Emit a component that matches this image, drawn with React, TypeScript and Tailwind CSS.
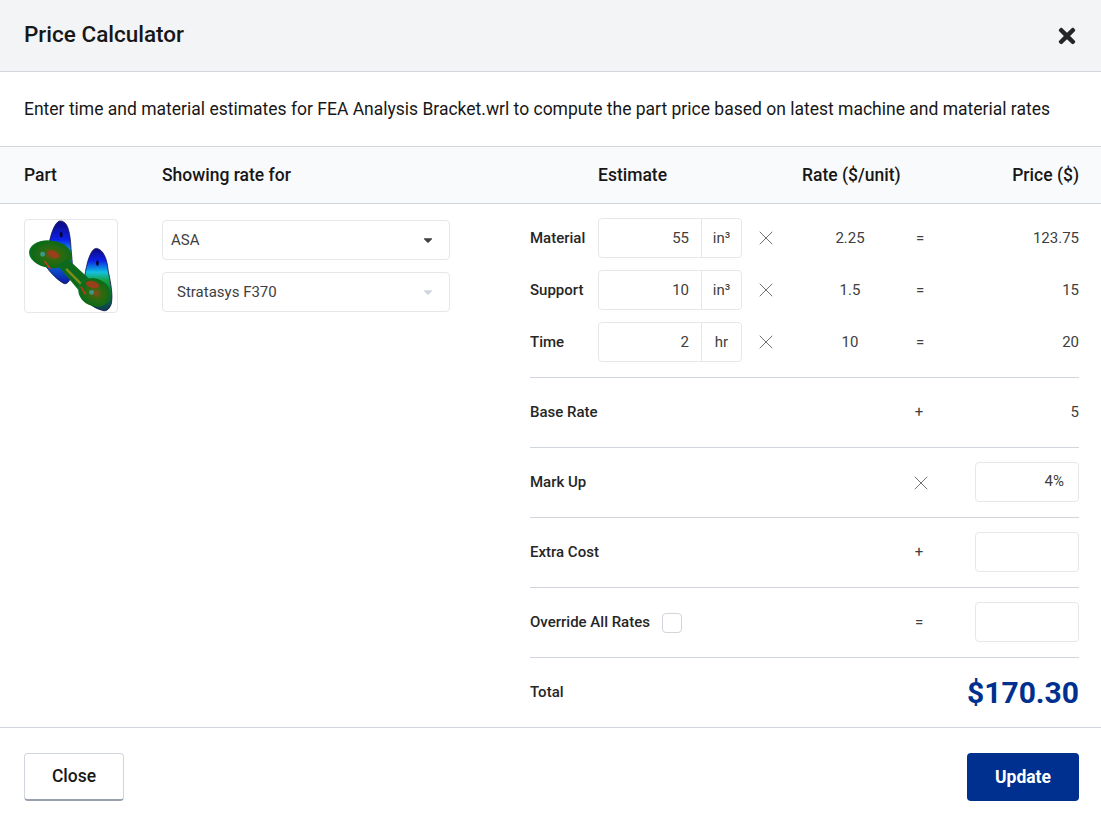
import { X } from "lucide-react";
import { FaTimes, FaCaretDown } from "react-icons/fa";
import type { ReactNode } from "react";

const estimates = [
  { label: "Material", value: "55", unit: "in³", rate: "2.25", price: "123.75" },
  { label: "Support", value: "10", unit: "in³", rate: "1.5", price: "15" },
  { label: "Time", value: "2", unit: "hr", rate: "10", price: "20" },
];

// stress plot of the bracket, no image files available here
function PartPreview() {
  return (
    <div className="w-23.5 h-23.5 -mt-px border border-gray-200 rounded bg-white overflow-hidden">
      <svg viewBox="0 0 94 94" className="w-full h-full">
        <defs>
          <linearGradient id="earLeft" x1="0" y1="0" x2="0" y2="1">
            <stop offset="0" stopColor="#08087a" />
            <stop offset="0.3" stopColor="#0a22e8" />
            <stop offset="0.52" stopColor="#12c0e0" />
            <stop offset="0.7" stopColor="#0a60d8" />
            <stop offset="1" stopColor="#0a18a0" />
          </linearGradient>
          <linearGradient id="earRight" x1="0" y1="0" x2="0" y2="1">
            <stop offset="0" stopColor="#08087a" />
            <stop offset="0.2" stopColor="#0a22e8" />
            <stop offset="0.38" stopColor="#12c0e0" />
            <stop offset="0.52" stopColor="#12a040" />
            <stop offset="1" stopColor="#0a3a50" />
          </linearGradient>
          <radialGradient id="plate" cx="0.55" cy="0.5" r="0.6">
            <stop offset="0" stopColor="#8a4a14" />
            <stop offset="0.35" stopColor="#2f6a10" />
            <stop offset="0.85" stopColor="#0a6a18" />
            <stop offset="1" stopColor="#18a880" />
          </radialGradient>
          <filter id="soft">
            <feGaussianBlur stdDeviation="0.7" />
          </filter>
        </defs>
        <g filter="url(#soft)">
          <path d="M24 28 C26 14 31 1 36 1 C43 1 46 10 47 29 C48 40 49 48 48 54 C47 60 44 66 40 65 C34 62 26 54 22 48 Z" fill="url(#earLeft)" stroke="#08084a" strokeWidth="0.8" />
          <path d="M61 58 C63 44 67 29 73 29 C80 30 84 40 85 52 C88 66 90 78 88 86 C86 92 82 94 78 92 C70 90 60 82 56 74 Z" fill="url(#earRight)" stroke="#08084a" strokeWidth="0.8" />
          <ellipse cx="26" cy="35" rx="22" ry="14" fill="url(#plate)" transform="rotate(8 26 35)" />
          <path d="M33 46 L44 40 L70 64 L60 78 Z" fill="#0e6a1c" />
          <path d="M42 50 L62 70" stroke="#7f8c18" strokeWidth="2.5" />
          <ellipse cx="71" cy="74" rx="17" ry="14" fill="url(#plate)" transform="rotate(25 71 74)" />
          <ellipse cx="29" cy="35" rx="6" ry="3.5" fill="#98401a" transform="rotate(25 29 35)" />
          <ellipse cx="69" cy="66" rx="7" ry="3.5" fill="#98401a" transform="rotate(15 69 66)" />
          <circle cx="18" cy="35" r="2.5" fill="#3a9888" />
          <circle cx="68" cy="74" r="2.5" fill="#3a9888" />
          <path d="M20 42 L26 50" stroke="#d83020" strokeWidth="1.5" />
          <path d="M57 68 L62 76" stroke="#d83020" strokeWidth="1.5" />
          <ellipse cx="37" cy="15" rx="1.4" ry="3" fill="#060630" />
          <ellipse cx="74" cy="44" rx="1.4" ry="3" fill="#060630" />
        </g>
      </svg>
    </div>
  );
}

function Select({ label, muted }: { label: string; muted?: boolean }) {
  return (
    <div className={`flex items-center justify-between h-10 border border-gray-200 rounded pr-3.5 text-neutral-700 ${muted ? "pl-3.5" : "pl-2"}`}>
      <span>{label}</span>
      <FaCaretDown className={muted ? "text-gray-300" : "text-neutral-700"} size={14} />
    </div>
  );
}

function Cross() {
  return <X className="text-neutral-500" size={24} strokeWidth={1} />;
}

function Row({ label, op, children }: { label: ReactNode; op: ReactNode; children?: ReactNode }) {
  return (
    <div className="flex items-center h-[70px] border-b border-gray-300">
      <div className="flex items-center gap-3 font-medium">{label}</div>
      <div className="w-5 ml-auto flex justify-center text-neutral-700">{op}</div>
      <div className="w-37.5 flex justify-end text-neutral-700">{children}</div>
    </div>
  );
}

function Box({ value }: { value?: string }) {
  return (
    <div className="flex items-center justify-end w-26 h-10 -mt-0.5 px-3.5 border border-gray-200 rounded text-neutral-700">
      {value}
    </div>
  );
}

export default function App() {
  return (
    <div className="bg-white h-screen overflow-hidden flex flex-col text-neutral-900 text-[17.5px]" style={{ fontFamily: "Roboto, sans-serif" }}>
      <header className="flex justify-between h-18 pl-6 pr-5.5 pt-4.5 bg-gray-100 border-b border-gray-300">
        <h1 className="text-[22.5px] font-medium">Price Calculator</h1>
        <FaTimes className="mt-1.5 text-neutral-800" size={24} />
      </header>

      <p className="flex items-center h-[74px] pl-6 pr-5.5">
        Enter time and material estimates for FEA Analysis Bracket.wrl to compute the part price based on latest machine and material rates
      </p>

      <div className="flex items-center h-[58px] pl-6 pr-5.5 bg-gray-50 border-y border-gray-300 font-medium">
        <div className="w-34">Part</div>
        <div className="w-[370px] pl-0.5">Showing rate for</div>
        <div className="w-17" />
        <div className="w-51">Estimate</div>
        <div>Rate ($/unit)</div>
        <div className="flex-1 text-right">Price ($)</div>
      </div>

      <main className="flex pl-6 pr-5.5 flex-1 text-[15px] text-neutral-800">
        <div className="w-[506px] flex pt-4">
          <div className="w-34">
            <PartPreview />
          </div>
          <div className="w-72 ml-0.5 flex flex-col gap-3">
            <Select label="ASA" />
            <Select label="Stratasys F370" muted />
          </div>
        </div>

        <div className="flex-1 flex flex-col">
          <div className="h-43.5 pt-2 border-b border-gray-300">
            {estimates.map((e) => (
              <div key={e.label} className="flex items-center h-13">
                <div className="w-17 font-medium">{e.label}</div>
                <div className="flex w-36 h-10 border border-gray-200 rounded text-neutral-700">
                  <div className="flex-1 flex items-center justify-end px-3">{e.value}</div>
                  <div className="w-10 flex items-center justify-center border-l border-gray-200">{e.unit}</div>
                </div>
                <div className="w-12 flex justify-center">
                  <Cross />
                </div>
                <div className="w-30 text-center text-neutral-700">{e.rate}</div>
                <div className="w-5 text-center text-neutral-700">=</div>
                <div className="flex-1 text-right text-neutral-700">{e.price}</div>
              </div>
            ))}
          </div>
          <Row label="Base Rate" op="+">5</Row>
          <Row
            label="Mark Up"
            op={
              <span className="ml-1">
                <Cross />
              </span>
            }
          >
            <Box value="4%" />
          </Row>
          <Row label="Extra Cost" op="+">
            <Box />
          </Row>
          <Row
            label={
              <>
                Override All Rates
                <span className="w-5 h-5 border border-gray-300 rounded" />
              </>
            }
            op="="
          >
            <Box />
          </Row>
          <div className="flex-1 flex items-center justify-between font-medium">
            <span>Total</span>
            <span className="text-3xl font-bold text-[#00308f]">$170.30</span>
          </div>
        </div>
      </main>

      <footer className="flex justify-between h-24 pl-6 pr-5.5 pt-6 border-t border-gray-300">
        <button className="w-25 h-12 mt-px bg-white border border-gray-300 border-b-2 border-b-gray-400 rounded font-medium">
          Close
        </button>
        <button className="h-12 mt-px px-7 bg-[#00308f] rounded font-bold text-white">Update</button>
      </footer>
    </div>
  );
}
